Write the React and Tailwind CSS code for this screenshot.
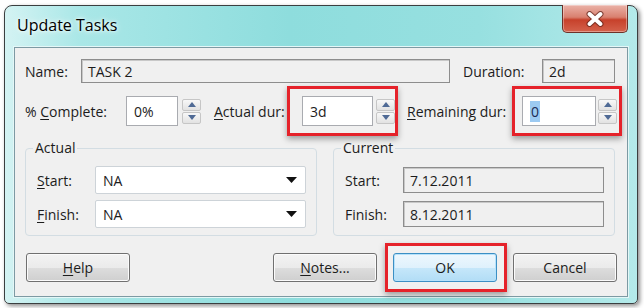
import React from 'react'

function SpinBtn({ up }) {
  return (
    <div className="flex h-[12px] items-center justify-center rounded-[2px] border border-[#c6c6c6] bg-gradient-to-b from-[#f8f8f8] to-[#e2e2e2]">
      <svg width="8" height="5" viewBox="0 0 8 5">
        <path d={up ? 'M0 5 L4 0 L8 5Z' : 'M0 0 L4 5 L8 0Z'} fill="#4f6a95" />
      </svg>
    </div>
  )
}

function Spin({ className = '' }) {
  return (
    <div className={`flex w-[19px] shrink-0 flex-col gap-[1px] ${className}`}>
      <SpinBtn up />
      <SpinBtn />
    </div>
  )
}

function Edit({ className = '', children }) {
  return (
    <div
      className={`flex h-[30px] shrink-0 items-center border border-[#a9abb0] bg-white pl-[7px] ${className}`}
    >
      {children}
    </div>
  )
}

function ReadOnly({ className = '', children }) {
  return (
    <div
      className={`flex shrink-0 items-center border border-[#8d8d8d] bg-[#f0f0f0] pl-[6px] shadow-[inset_1px_1px_0_#c8c8c8] ${className}`}
    >
      {children}
    </div>
  )
}

function Combo({ children }) {
  return (
    <div className="flex h-[28px] w-[211px] items-center justify-between rounded-[2px] border border-[#cdd3d8] bg-white pl-[7px] pr-[8px]">
      <span>{children}</span>
      <svg width="11" height="6" viewBox="0 0 11 6">
        <path d="M0 0 L11 0 L5.5 6Z" fill="#111" />
      </svg>
    </div>
  )
}

function Btn({ className = '', ok, children }) {
  return (
    <div
      className={`flex h-[29px] w-[104px] shrink-0 items-center justify-center rounded-[3px] border ${
        ok
          ? 'border-[#3c8fc4] bg-[linear-gradient(to_bottom,#eef7fd_0%,#dff1fc_50%,#c6e7fa_51%,#b2ddf6_100%)] shadow-[inset_0_0_0_1px_#b6e2fb]'
          : 'border-[#707070] bg-[linear-gradient(to_bottom,#f3f3f3_0%,#ebebeb_50%,#dddddd_51%,#cfcfcf_100%)] shadow-[inset_0_0_0_1px_#fbfbfb]'
      } ${className}`}
    >
      {children}
    </div>
  )
}

function RedBox({ className = '', children }) {
  return (
    <div
      className={`flex shrink-0 items-center border-[3px] border-[#e5222a] shadow-[0_3px_6px_rgba(0,0,0,0.35)] ${className}`}
    >
      {children}
    </div>
  )
}

function Group({ title, className = '', children }) {
  return (
    <fieldset
      className={`rounded-[4px] border border-[#d3dde3] pb-[7px] ${className}`}
    >
      <legend className="ml-[7px] px-[2px] leading-[18px]">{title}</legend>
      <div className="flex flex-col gap-[6px] pl-[11px] pt-[9px]">{children}</div>
    </fieldset>
  )
}

function Label({ className = '', children }) {
  return <span className={`shrink-0 whitespace-nowrap ${className}`}>{children}</span>
}

export default function App() {
  return (
    <div className="h-[308px] w-[644px] overflow-hidden bg-white pl-[4px] pt-[5px] font-['Open_Sans','Noto_Sans',sans-serif] text-[14px] text-[#1c1c1c]">
      <div className="h-[299px] w-[634px] rounded-t-[8px] rounded-b-[5px] border border-[#3b3f40] bg-[linear-gradient(to_right,#d4f3f3_0%,#a9e7e7_12%,#8edddd_45%,#97e0e0_75%,#b4eaea_100%)] px-[9px] shadow-[2px_2px_4px_rgba(0,0,0,0.45)]">
        <div className="flex h-[41px] items-start justify-between">
          <div className="pl-[3px] pt-[8px] text-[16px] leading-[22px] text-black [text-shadow:0_0_6px_#ffffff,0_0_3px_#ffffff]">
            Update Tasks
          </div>
          <div className="-mt-[1px] flex h-[28px] w-[66px] items-center justify-center rounded-b-[5px] border border-t-0 border-[#6e3128] bg-[linear-gradient(to_bottom,#eab2a8_0%,#d9806f_45%,#c7412b_55%,#d4624c_100%)] shadow-[inset_0_0_0_1px_rgba(255,255,255,0.35)]">
            <svg width="20" height="16" viewBox="0 0 20 16">
              <path d="M4.5 3 L15.5 13 M15.5 3 L4.5 13" stroke="#5b2219" strokeWidth="6" strokeLinecap="round" opacity="0.7" />
              <path d="M4.5 3 L15.5 13 M15.5 3 L4.5 13" stroke="#ffffff" strokeWidth="4" strokeLinecap="round" />
            </svg>
          </div>
        </div>

        <div className="h-[250px] w-[614px] border border-[#7d9aa3] bg-[#f0f0f0] shadow-[0_0_0_1px_#e4f7f7]">
          <div className="mt-[11px] flex h-[24px] items-center pl-[10px]">
            <Label className="w-[56px]">Name:</Label>
            <ReadOnly className="h-[24px] w-[369px]">TASK 2</ReadOnly>
            <Label className="ml-[13px] w-[79px]">Duration:</Label>
            <ReadOnly className="h-[24px] w-[73px]">2d</ReadOnly>
          </div>

          <div className="mt-[3px] flex h-[50px] items-center pl-[10px]">
            <Label className="w-[101px]">
              % <u className="underline-offset-2">C</u>omplete:
            </Label>
            <Edit className="w-[52px]">0%</Edit>
            <Spin className="ml-[4px]" />
            <Label className="ml-[13px] w-[73px]">
              <u className="underline-offset-2">A</u>ctual dur:
            </Label>
            <RedBox className="h-[50px] w-[111px] pl-[12px]">
              <Edit className="w-[71px]">3d</Edit>
              <Spin className="ml-[3px]" />
            </RedBox>
            <Label className="ml-[9px] w-[105px]">
              <u className="underline-offset-2">R</u>emaining dur:
            </Label>
            <RedBox className="h-[50px] w-[110px] pl-[7px]">
              <Edit className="w-[74px]">
                <span className="bg-[#9ccaf2] px-[1px] text-[#1b2a55]">0</span>
              </Edit>
              <Spin className="ml-[2px]" />
            </RedBox>
          </div>

          <div className="mt-[3px] flex gap-[16px] pl-[10px]">
            <Group title="Actual" className="w-[292px]">
              <div className="flex h-[28px] items-center">
                <Label className="w-[58px]">
                  <u className="underline-offset-2">S</u>tart:
                </Label>
                <Combo>NA</Combo>
              </div>
              <div className="flex h-[28px] items-center">
                <Label className="w-[58px]">
                  <u className="underline-offset-2">F</u>inish:
                </Label>
                <Combo>NA</Combo>
              </div>
            </Group>
            <Group title="Current" className="w-[282px]">
              <div className="flex h-[28px] items-center">
                <Label className="w-[58px]">Start:</Label>
                <ReadOnly className="h-[26px] w-[201px]">7.12.2011</ReadOnly>
              </div>
              <div className="flex h-[28px] items-center">
                <Label className="w-[58px]">Finish:</Label>
                <ReadOnly className="h-[26px] w-[201px]">8.12.2011</ReadOnly>
              </div>
            </Group>
          </div>

          <div className="mt-[7px] flex h-[49px] items-center pl-[11px]">
            <Btn>
              <u className="underline-offset-2">H</u>elp
            </Btn>
            <Btn className="ml-[143px]">
              <u className="underline-offset-2">N</u>otes...
            </Btn>
            <RedBox className="ml-[8px] h-[49px] w-[122px] pl-[5px]">
              <Btn ok>OK</Btn>
            </RedBox>
            <Btn className="ml-[6px]">Cancel</Btn>
          </div>
        </div>
      </div>
    </div>
  )
}
